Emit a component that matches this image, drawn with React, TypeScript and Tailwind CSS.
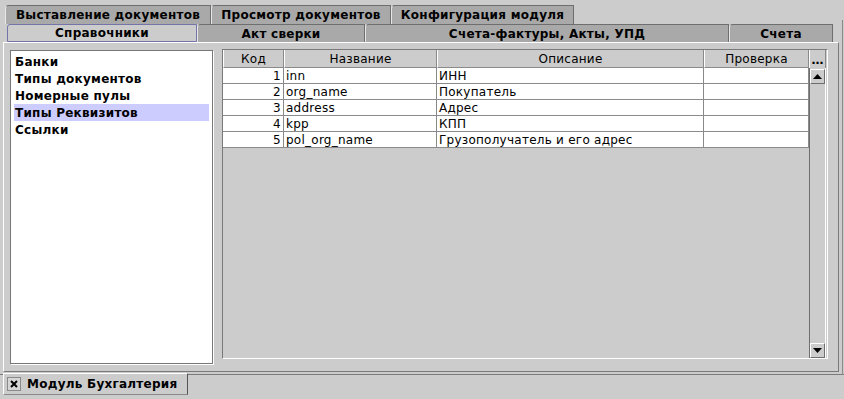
import React from "react";

const rows = [
  { id: 1, name: "inn", desc: "ИНН" },
  { id: 2, name: "org_name", desc: "Покупатель" },
  { id: 3, name: "address", desc: "Адрес" },
  { id: 4, name: "kpp", desc: "КПП" },
  { id: 5, name: "pol_org_name", desc: "Грузополучатель и его адрес" },
];

const listItems = ["Банки", "Типы документов", "Номерные пулы", "Типы Реквизитов", "Ссылки"];

function TopTab({ label, w }: { label: string; w: string }) {
  return (
    <div
      className={`${w} h-[19px] bg-[#a9a9a9] border-t border-r border-[#6e6e6e] border-l border-l-[#e8e8e8] rounded-tl-[4px] flex items-center justify-center text-[12px] tracking-[0.25px] font-bold leading-none`}
    >
      {label}
    </div>
  );
}

function SecondTab({ label, w, active }: { label: string; w: string; active?: boolean }) {
  if (active) {
    return (
      <div
        className={`${w} h-[18px] bg-[#cccccc] border border-[#7474a8] rounded-tl-[3px] flex items-center justify-center text-[12px] tracking-[0.25px] font-bold leading-none`}
      >
        {label}
      </div>
    );
  }
  return (
    <div
      className={`${w} h-[18px] bg-[#a9a9a9] border-t border-r border-[#6e6e6e] border-l border-l-[#e8e8e8] rounded-tl-[4px] flex items-center justify-center text-[12px] tracking-[0.25px] font-bold leading-none`}
    >
      {label}
    </div>
  );
}

export default function App() {
  return (
    <div className="w-[844px] h-[399px] bg-[#cccccc] flex flex-col overflow-hidden font-['DejaVu_Sans',sans-serif] text-black relative">
      {/* right edge line */}
      <div className="absolute right-[1px] top-[20px] bottom-[24px] w-px bg-[#8a8a8a]" />

      {/* Top tab row */}
      <div className="h-[24px] flex items-end pl-[5px]">
        <TopTab label="Выставление документов" w="w-[206px]" />
        <TopTab label="Просмотр документов" w="w-[180px]" />
        <TopTab label="Конфигурация модуля" w="w-[183px]" />
      </div>

      {/* Second tab row */}
      <div className="h-[18px] flex pl-[7px]">
        <SecondTab label="Справочники" w="w-[190px]" active />
        <SecondTab label="Акт сверки" w="w-[168px]" />
        <SecondTab label="Счета-фактуры, Акты, УПД" w="w-[364px]" />
        <SecondTab label="Счета" w="w-[104px]" />
      </div>

      {/* Main panel */}
      <div className="h-[330px] w-[836px] ml-[3px] border-t border-l border-white border-r border-b border-r-[#7a7a7a] border-b-[#7a7a7a] flex pt-[7px] pl-[6px] gap-[9px]">
        {/* Left list */}
        <div className="w-[203px] h-[314px] bg-white border border-[#777777] shadow-[1px_1px_0_#ffffff] pt-[2px]">
          {listItems.map((it, i) => (
            <div
              key={it}
              className={`h-[17px] mx-[3px] pl-[1px] flex items-center text-[12px] tracking-[0.25px] font-bold leading-none ${
                i === 3 ? "bg-[#ccccff]" : ""
              }`}
            >
              {it}
            </div>
          ))}
        </div>

        {/* Table */}
        <div className="w-[606px] h-[310px] -mt-[1px] border-t border-l border-[#7a7a7a] border-r border-b border-r-white border-b-white flex flex-col">
          {/* Header */}
          <div className="h-[18px] flex text-[12px] tracking-[0.25px] leading-none">
            <div className="w-[61px] border-l border-white border-r border-r-[#8a8a8a] border-b border-b-[#8a8a8a] flex items-center justify-center">Код</div>
            <div className="w-[153px] border-l border-white border-r border-r-[#8a8a8a] border-b border-b-[#8a8a8a] flex items-center justify-center">Название</div>
            <div className="w-[267px] border-l border-white border-r border-r-[#8a8a8a] border-b border-b-[#8a8a8a] flex items-center justify-center">Описание</div>
            <div className="w-[105px] border-l border-white border-r border-r-[#8a8a8a] border-b border-b-[#8a8a8a] flex items-center justify-center">Проверка</div>
            <div className="w-[17px] border-l border-white border-r border-r-[#8a8a8a] flex items-end justify-center pb-[2px] font-bold tracking-normal">…</div>
          </div>
          <div className="flex flex-1">
            {/* Data */}
            <div className="w-[586px] flex flex-col">
              {rows.map((r) => (
                <div key={r.id} className="h-[16px] flex text-[12px] tracking-[0.25px] leading-none bg-white">
                  <div className="w-[61px] border-r border-b border-[#8a8a8a] flex items-center justify-end pr-[2px]">{r.id}</div>
                  <div className="w-[153px] border-r border-b border-[#8a8a8a] flex items-center pl-[2px]">{r.name}</div>
                  <div className="w-[267px] border-r border-b border-[#8a8a8a] flex items-center pl-[2px]">{r.desc}</div>
                  <div className="w-[105px] border-r border-b border-[#8a8a8a]" />
                </div>
              ))}
            </div>
            {/* Scrollbar */}
            <div className="w-[17px] flex flex-col border-l border-[#6e6e6e] border-r border-r-white bg-[#cccccc]">
              <div className="h-[15px] mt-[1px] border-t border-l border-white border-r border-b border-r-[#6e6e6e] border-b-[#6e6e6e] flex items-center justify-center">
                <svg width="9" height="5" viewBox="0 0 9 5"><polygon points="0,5 9,5 4.5,0" fill="#000" /></svg>
              </div>
              <div className="flex-1" />
              <div className="h-[15px] border-t border-l border-white border-r border-b border-r-[#6e6e6e] border-b-[#6e6e6e] flex items-center justify-center">
                <svg width="9" height="5" viewBox="0 0 9 5"><polygon points="0,0 9,0 4.5,5" fill="#000" /></svg>
              </div>
            </div>
          </div>
        </div>
      </div>

      {/* Bottom bar */}
      <div className="mt-[2px] flex-1 border-t border-[#7a7a7a] flex items-start">
        <div className="-mt-[2px] ml-[3px] w-[185px] h-[22px] bg-[#cccccc] border-t border-l border-white border-r border-b border-r-[#555555] border-b-[#8a8a8a] flex items-center pl-[3px] gap-[6px]">
          <div className="w-[14px] h-[14px] bg-[#d6d6d6] border border-[#8a8a8a] flex items-center justify-center">
            <svg width="8" height="8" viewBox="0 0 8 8">
              <path d="M1 1 L7 7 M7 1 L1 7" stroke="#000" strokeWidth="2" />
            </svg>
          </div>
          <span className="text-[12px] tracking-[0.25px] font-bold leading-none">Модуль Бухгалтерия</span>
        </div>
      </div>
    </div>
  );
}
